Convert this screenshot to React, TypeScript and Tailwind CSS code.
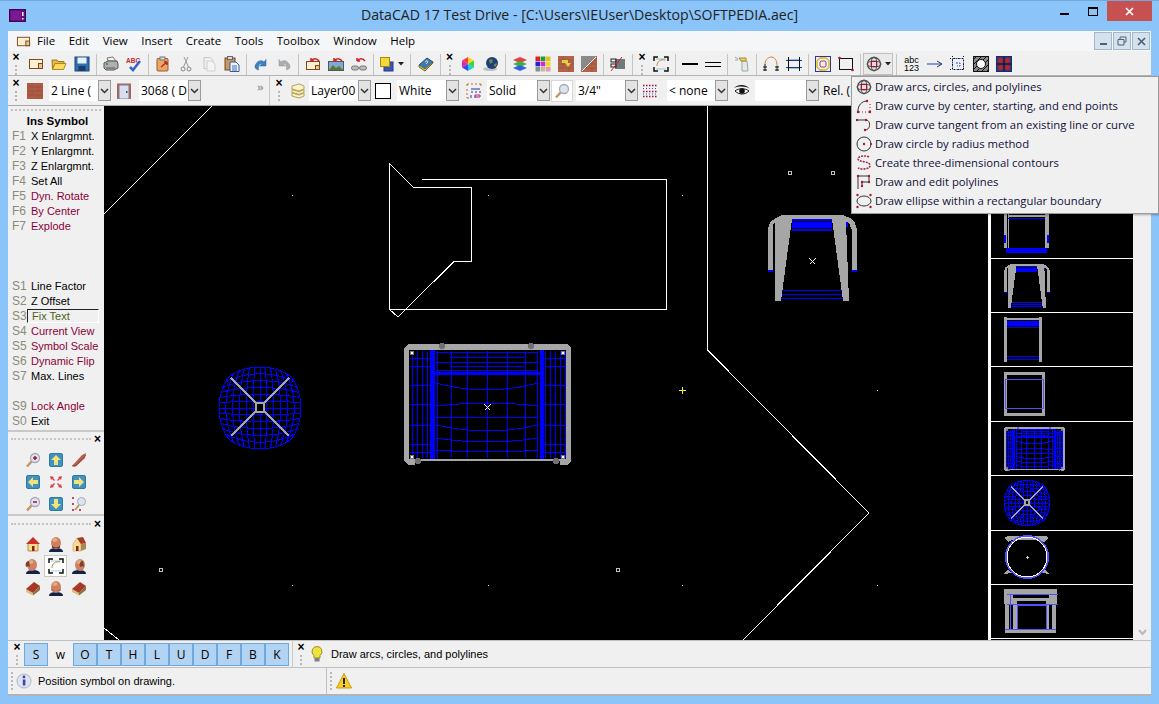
import React from "react";

const R = "#a5123a";
const G = "#a6a6a6";
const B = "#0000ff";
const LS = "font-['Liberation_Sans']";

type P = { children?: React.ReactNode; s?: number };
const I = ({ children, s = 16 }: P) => (
  <svg width={s} height={s} viewBox="0 0 16 16" className="block shrink-0" fill="none">{children}</svg>
);

const Doc = ({ s }: P) => <I s={s}><rect x="1.500" y="3.500" width="13" height="9" fill="#fdf0cf" stroke="#7b4a24" /><rect x="10.500" y="7.500" width="4" height="5" fill="#e8c48c" stroke="#7b4a24" /></I>;
const Folder = () => <I><path d="M1 4h5l1 1.500h6v2H4L1.500 13z" fill="#e6b93a" stroke="#9a7a20" /><path d="M4 7.500h11L12.500 13.500H1.500z" fill="#ffd95a" stroke="#a98a25" /></I>;
const Floppy = () => <I><rect x="1" y="1" width="14" height="14" fill="#2f6fb0" stroke="#1c4478" /><rect x="3.500" y="1.500" width="9" height="6" fill="#e8f1f8" /><rect x="4.500" y="10" width="7" height="5" fill="#1c3c68" /></I>;
const Printer = () => <I><path d="M4 2l6-1 3 4H5z" fill="#f4f4f4" stroke="#777" /><path d="M1 7l4-2h9l1 3v4l-4 2H3l-2-2z" fill="#b0b0b0" stroke="#555" /><rect x="3" y="7" width="2" height="2" fill="#2aa84a" /><path d="M3 12h9" stroke="#555" /></I>;
const Abc = () => <I><text x="0" y="6.500" fontSize="6.500" fontWeight="700" fill="#c02828" fontFamily="Liberation Sans">ABC</text><path d="M4 11l3 3 7-9" stroke="#3a62c8" strokeWidth="2.500" /></I>;
const Clip = () => <I><rect x="2" y="2.500" width="11" height="12.500" rx="1" fill="#e8a868" stroke="#9a5c28" /><rect x="5" y="1" width="5" height="3" fill="#d8d8d8" stroke="#777" /><path d="M6 11l6-5M12 6H9M12 6v3" stroke="#c02828" strokeWidth="1.500" /></I>;
const Sciss = () => <I><circle cx="5" cy="13" r="2" stroke="#8a8a8a" /><circle cx="11" cy="13" r="2" stroke="#8a8a8a" /><path d="M5.500 11L10 1M10.500 11L6 1" stroke="#9a9a9a" /></I>;
const Copy = () => <I><path d="M3 1.500h6l3 3v8H3z" fill="#efefef" stroke="#c8c8c8" /><path d="M6 5h5l3 3v7H6z" fill="#f4f4f4" stroke="#cfcfcf" /></I>;
const Paste = () => <I><rect x="1" y="2" width="10" height="12" fill="#c89a60" stroke="#6d4a24" /><rect x="3.500" y="0.500" width="5" height="3" fill="#ddd" stroke="#666" /><path d="M6 6h6l3 3v6.500H6z" fill="#eef4fb" stroke="#3a5a90" /><path d="M8 10h5M8 12h5M8 14h5" stroke="#3a70b8" /></I>;
const Undo = ({ grey }: { grey?: boolean }) => <I><path d={grey ? "M13 8C11 4 7 4 5 6L3 3.500V10h6.500L7.500 8C9 7 11 8 10.500 14C14 13 15 11 13 8z" : "M3 8C5 4 9 4 11 6L13 3.500V10H6.500L8.500 8C7 7 5 8 5.500 14C2 13 1 11 3 8z"} fill={grey ? "#a8adb2" : "#3f82c4"} stroke={grey ? "#92979c" : "#2a5f98"} strokeWidth="0.500" /></I>;
const RedArrow = () => <path d="M6 5C8 2 12 2 14 5M6 5V2M6 5h3" stroke="#d02020" strokeWidth="1.500" />;
const DocU = () => <I><rect x="1.500" y="5.500" width="13" height="8" fill="#fdf0cf" stroke="#7b4a24" /><rect x="10.500" y="9.500" width="4" height="4" fill="#e8c48c" stroke="#7b4a24" /><RedArrow /></I>;
const PicU = () => <I><rect x="0.500" y="5.500" width="15" height="9" fill="#7fa8d8" stroke="#555" /><path d="M1 14l4-5 3 3 3-2 4 4z" fill="#567a30" /><RedArrow /></I>;
const Chain = () => <I><rect x="0.500" y="10" width="7" height="4" rx="2" fill="#bbb" stroke="#777" /><rect x="8.500" y="10" width="7" height="4" rx="2" fill="#bbb" stroke="#777" /><RedArrow /></I>;
const Squares = () => <I><rect x="5" y="6" width="9" height="9" fill="#3a5ab0" stroke="#223a80" /><rect x="1.500" y="1.500" width="9" height="9" fill="#f4d83a" stroke="#a08a10" /></I>;
const Book = () => <I><path d="M1 9L9 2l6 4-8 8z" fill="#3a78c0" stroke="#1c4a88" /><path d="M1 9v2l6 4 8-8V6l-8 7z" fill="#e8c848" stroke="#7a6a20" /><path d="M7 6l2-1.500L10 6 8 8" stroke="#f4e080" /></I>;
const Cube = () => <I><path d="M8 1l6 3.500L8 8z" fill="#ffd020" /><path d="M14 4.500v7L8 8z" fill="#40d040" /><path d="M14 11.500L8 15V8z" fill="#20c8e0" /><path d="M8 15l-6-3.500L8 8z" fill="#3050e0" /><path d="M2 11.500v-7L8 8z" fill="#e020c0" /><path d="M2 4.500L8 1v7z" fill="#f04040" /></I>;
const Globe = () => <I><ellipse cx="7" cy="13" rx="7" ry="2" fill="#c0c0c0" /><circle cx="9" cy="7" r="6" fill="#1f3f78" /><path d="M6 4l3-1 1 3-3 2zM11 8l3-1-1 4-2-1z" fill="#6a8a50" /></I>;
const Layers = () => <I><path d="M1 4l7-3 7 3-7 3z" fill="#e04040" /><path d="M1 8l7-3 7 3-7 3z" fill="#40b040" /><path d="M1 12l7-3 7 3-7 3z" fill="#3060e0" /></I>;
const CGrid = () => { const c = ["#e02020", "#20a020", "#e0c020", "#2020e0", "#e020e0", "#e0e020", "#889088", "#c0b8a0", "#e0a0a0"]; return <I>{c.map((f, i) => <rect key={i} x={0.500 + (i % 3) * 5.200} y={0.500 + Math.floor(i / 3) * 5.200} width="4.600" height="4.600" fill={f} />)}</I>; };
const Brick = ({ v }: { v?: number }) => <I><rect width="16" height="16" fill={v === 1 ? "#ad5c44" : "#b3624a"} /><path d="M0 4h16M0 8h16M0 12h16M5 0v4M11 4v4M5 8v4M11 12v4" stroke="#8f4a38" strokeWidth="0.500" />{v === 2 && <path d="M4 4h6v3h3l-3 4-3-4H4z" fill="#e0d040" />}{v === 3 && <><path d="M0 0h16L0 16z" fill="#8a8a8a" /><path d="M1 15L15 1" stroke="#fff" /></>}</I>;
const Machine = () => <I><rect x="5" y="3" width="10" height="10" fill="#707880" /><rect x="1" y="3" width="5" height="3" fill="none" stroke="#222" /><rect x="1" y="8" width="5" height="3" fill="none" stroke="#222" /><path d="M1 15L12 1" stroke="#d02020" /></I>;
const Corners = ({ s }: P) => <I s={s}><path d="M1 5V1h4M11 1h4v4M15 11v4h-4M5 15H1v-4" stroke="#111" strokeWidth="1.500" /><path d="M4 10C4 5 8 3 12 4" stroke="#c08840" /><path d="M3 3l10 0M3 13h10" stroke="#40a0b0" strokeWidth="0.500" /></I>;
const HLine = () => <I><path d="M0 8h16" stroke="#000" strokeWidth="2" /></I>;
const DLine = () => <I><path d="M0 6.500h16M0 10.500h16" stroke="#000" /></I>;
const Spray = () => <I><path d="M8 5h5l1 10H8z" fill="#e8e8e8" stroke="#9aa" /><path d="M5 2h7v3H7z" fill="#f0d060" stroke="#a08a30" /><path d="M1 1l3 2M1 4h3" stroke="#8ab" /></I>;
const Curve = () => <I><path d="M2 15V8M0 11h4M0 14h4" stroke="#111" /><path d="M2 8C2 3 6 1 9 1c4 1 5 5 5 9" stroke="#d08030" /><path d="M14 15v-5M12 11h4M12 14h4" stroke="#111" /></I>;
const Dim = () => <I><rect x="2.500" y="4" width="11" height="8" fill="none" stroke="#4090a0" /><path d="M0 4.500h16M0 11.500h16" stroke="#203890" /><path d="M2.500 1v14M13.500 1v14" stroke="#111" /></I>;
const Octa = () => <I><rect x="0.500" y="0.500" width="15" height="15" stroke="#2a3a90" /><path d="M5 2h6l3 3v6l-3 3H5l-3-3V5z" stroke="#e0b020" strokeWidth="1.300" /><path d="M6 5h4l1 1v4l-1 1H6l-1-1V6z" stroke="#a04060" /></I>;
const RectDots = () => <I><rect x="1.500" y="2.500" width="13" height="11" stroke="#111" /><circle cx="1.500" cy="2" r="1.300" fill={R} /><circle cx="14.500" cy="14" r="1.300" fill={R} /></I>;
const Target = ({ s }: P) => <I s={s}><circle cx="8" cy="8" r="6.500" stroke="#444" strokeWidth="1.300" /><ellipse cx="8" cy="8" rx="3" ry="7" stroke="#555" /><ellipse cx="8" cy="8" rx="7" ry="3" stroke="#555" /><rect x="5.500" y="5.500" width="5" height="5" fill="#f0d8d0" stroke={R} /></I>;
const Arrow = () => <I><path d="M0 8h15M10 5l5 3-5 3" stroke="#2a3a90" /></I>;
const Dash = () => <I><rect x="2.500" y="2.500" width="11" height="11" stroke="#2a3a90" strokeDasharray="2 1" /><path d="M0 2.500h16M0 13.500h16M2.500 0v16M13.500 0v16" stroke="#111" strokeDasharray="1 3" /><path d="M6 7h4v3H7" stroke="#3050c0" strokeDasharray="2 1" /></I>;
const Hatch = () => <I><rect x="0.500" y="0.500" width="15" height="15" fill="#888" stroke="#111" /><path d="M0 4L4 0M0 9L9 0M0 14L14 0M3 16L16 3M8 16L16 8M13 16l3-3" stroke="#111" /><circle cx="8" cy="8" r="4.500" fill="#fff" stroke="#111" /></I>;
const FourD = () => <I><rect x="0.500" y="0.500" width="15" height="15" fill="#2a3a80" stroke="#1a2a70" /><path d="M8 1v14M1 8h14" stroke="#111" /><circle cx="4.500" cy="4.500" r="2.500" fill="#c02030" /><circle cx="11.500" cy="4.500" r="2.500" fill="#c02030" /><circle cx="4.500" cy="11.500" r="2.500" fill="#c02030" /><circle cx="11.500" cy="11.500" r="2.500" fill="#c02030" /></I>;
const Stack = () => <I><path d="M2 3l7-2 5 2v3L9 8 2 6z" fill="#fdf3c4" stroke="#b0a060" /><path d="M2 6.500L9 8.500l5-2v3L9 11.500 2 9.500z" fill="#f6e8a8" stroke="#b0a060" /><path d="M2 10l7 2 5-2v3l-5 2-7-2z" fill="#fdf3c4" stroke="#b0a060" /></I>;
const Door = () => <I><rect x="1" y="0.500" width="14" height="15.500" fill="#b5604a" /><rect x="3" y="2" width="10" height="14" fill="#d8e0f0" stroke="#7080a0" /><rect x="10" y="8" width="1.500" height="2" fill="#405080" /></I>;
const DotGrid = () => <I><path d="M1 2.500h14M1 8.500h14M1 13.500h14" stroke={R} strokeWidth="1.500" strokeDasharray="1.500 1.500" /><path d="M1 5.500h14" stroke="#3050c0" strokeWidth="1" strokeDasharray="1 2" /><path d="M1 11h14" stroke="#3050c0" strokeWidth="1" strokeDasharray="1 2" /></I>;
const LineStyle = () => <I><path d="M1 3V1h2M5 1h2M9 1h2M13 1h2v2M1 6v2M1 10v2M1 14v1h2" stroke="#c06820" /><path d="M5 6h9M5 9h2M9 9h2M13 9h2M5 12v3M9 12v3" stroke="#2030a0" /><path d="M9 12h5v2H9" stroke="#c02080" /></I>;
const Mag = ({ m }: { m?: string }) => <I><path d="M7 9L2 14.500" stroke="#c09860" strokeWidth="2.500" /><circle cx="10" cy="6" r="4.500" fill="#dce4f0" stroke="#a8a8b8" strokeWidth="1.300" />{m && <path d={m} stroke={R} strokeWidth="1.500" />}</I>;
const Eye = () => <I><path d="M0 5C4 1 12 1 16 6C12 3 5 3 0 5z" fill="#111" /><path d="M1 8C5 5 11 5 15 8C11 12 5 12 1 8z" fill="#fff" stroke="#111" /><circle cx="8" cy="8" r="2.800" fill="#111" /></I>;
const ArrowBtn = ({ d }: { d: string }) => <I><rect x="1.500" y="1.500" width="13" height="13" rx="1.500" fill="#3e93c0" stroke="#2f7aa4" /><path d={d} fill="#f2e27a" /></I>;
const Expand = () => <I><path d="M2 2l4 1-1 1 2 2-1 1-2-2-1 1zM14 2l-1 4-1-1-2 2-1-1 2-2-1-1zM14 14l-4-1 1-1-2-2 1-1 2 2 1-1zM2 14l1-4 1 1 2-2 1 1-2 2 1 1z" fill="#d8404a" /></I>;
const Pencil = () => <I><path d="M1 14L11 3l4-2-1 5-10 9z" fill="#b5604a" /><path d="M1 14l5-1 9-10" stroke="#7b3a28" strokeWidth="0.700" /></I>;
const DotMag = () => <I><path d="M8 9L4 14" stroke="#c09860" strokeWidth="2" /><circle cx="10.500" cy="5.500" r="4" fill="#dce4f0" stroke="#a8a8b8" /><circle cx="2" cy="2" r="1" fill={R} /><circle cx="2" cy="8" r="1" fill={R} /><circle cx="2" cy="14" r="1" fill={R} /><circle cx="9" cy="14" r="1" fill={R} /></I>;
const House = ({ side }: { side?: number }) => <I>
  {side === 1 && <><path d="M2 8L6 2l4 6v7H2z" fill="#f6dc90" stroke="#b09050" strokeWidth="0.500" /><path d="M10 8l5-1v6l-5 2z" fill="#a88a58" /><path d="M6 2l6-1 3 6-5 1z" fill="#a83828" /><rect x="5" y="10" width="2.500" height="5" fill="#8a2018" /></>}
  {side === 2 && <><path d="M1 9l7 4v2.500L1 12z" fill="#d8c080" /><path d="M8 13l7-7v4l-7 5.500z" fill="#8a7040" /><path d="M1 9l8-7 6 4-7 7z" fill="#a83828" /></>}
  {!side && <><path d="M3 7h10v8H3z" fill="#f6dc90" stroke="#b09050" /><path d="M8 1l7 7H1z" fill="#c83028" /><rect x="7" y="10" width="2.500" height="5" fill="#8a2018" /></>}
</I>;
const Head = ({ t = 0, back }: { t?: number; back?: boolean }) => <I><path d="M1 16c0-3 3-4 7-4s7 1 7 4z" fill="#14224a" /><ellipse cx={8 + t} cy="7" rx="5" ry="6" fill="#cc8260" /><ellipse cx={7 + t} cy="4" rx="2.500" ry="2" fill="#e4a888" />{!back && <path d={t ? `M${8 + t * 4} 3c-3 0-4 3-3 6 1-1 3-1 4 0z` : "M4 9c1 3 7 3 8 0v3H4z"} fill="#7a4030" />}{back && <path d="M3.500 8c2 4 7 4 9 0v3h-9z" fill="#a86048" />}</I>;
const Info = () => <I><circle cx="8" cy="8" r="7" fill="#e0e4f4" stroke="#b0b4c8" /><rect x="6.800" y="6.500" width="2.600" height="6" fill="#3a4aa0" /><circle cx="8" cy="4" r="1.400" fill="#3a4aa0" /></I>;
const Warn = () => <I><path d="M8 0.500L15.500 15H0.500z" fill="#f8cc20" stroke="#c89810" /><rect x="7" y="5" width="2" height="6" fill="#222" /><rect x="7" y="12" width="2" height="2" fill="#222" /></I>;
const Bulb = () => <I><path d="M8 0.500a5 5 0 0 1 3 9V12H5V9.500a5 5 0 0 1 3-9z" fill="#f0e040" stroke="#a09020" /><rect x="5.500" y="12" width="5" height="3.500" fill="#808080" /></I>;

const PArc = () => <I><path d="M2 13C2 7 6 3 11 3" stroke="#333" /><path d="M3 14h10M14 13V6" stroke={R} strokeDasharray="1 2" /><circle cx="2" cy="14" r="1.200" fill={R} /><circle cx="14" cy="14" r="1.200" fill={R} /><circle cx="11" cy="3" r="1.200" fill={R} /></I>;
const PTan = () => <I><path d="M1 3h9C15 3 15 13 9 13" stroke="#333" /><circle cx="1" cy="3" r="1.200" fill={R} /><circle cx="10" cy="3" r="1.200" fill={R} /><circle cx="9" cy="13" r="1.200" fill={R} /></I>;
const PCir = () => <I><circle cx="8" cy="8" r="7" stroke="#333" /><circle cx="8" cy="8" r="1.200" fill={R} /><circle cx="15" cy="8" r="1" fill={R} /></I>;
const PCon = () => <I><path d="M13 2C9 0 2 1 2 4s11 2 12 6-8 5-12 3" stroke="#9a2848" strokeWidth="1.500" strokeDasharray="2 1" /></I>;
const PPoly = () => <I><path d="M2 15V2h11v6H6v4" stroke="#333" /><circle cx="2" cy="2" r="1.200" fill={R} /><circle cx="13" cy="2" r="1.200" fill={R} /><circle cx="13" cy="8" r="1.200" fill={R} /><circle cx="6" cy="8" r="1.200" fill={R} /><circle cx="6" cy="12" r="1.200" fill={R} /></I>;
const PEll = () => <I><ellipse cx="8" cy="8" rx="7" ry="5" stroke="#333" /><circle cx="1.500" cy="2" r="1.200" fill={R} /><circle cx="14.500" cy="2" r="1.200" fill={R} /><circle cx="1.500" cy="14" r="1.200" fill={R} /><circle cx="14.500" cy="14" r="1.200" fill={R} /></I>;

const Slot = ({ children }: P) => <div className="w-[23px] h-[22px] flex items-center justify-center shrink-0">{children}</div>;
const Sep = ({ w = "w-[6px]" }: { w?: string }) => <div className={`${w} h-[21px] flex justify-center shrink-0`}><div className="w-px h-full bg-[#c4c4c4]" /></div>;
const Handle = ({ w }: { w: string }) => (
  <div className={`${w} flex flex-col items-center shrink-0 -mt-[2px]`}>
    <span className={`text-[12px] leading-[11px] font-bold text-black ${LS}`}>×</span>
    <span className="mt-[2px] h-[10px] border-l-2 border-dotted border-[#b8b8b8]" />
  </div>
);

const Combo = ({ t, ml, w = "w-[49px]" }: { t: string; ml: string; w?: string }) => (
  <div className={`${ml} flex h-[21px] shrink-0`}>
    <div className={`${w} bg-white pl-[2px] leading-[21px] text-[12px] text-black whitespace-nowrap overflow-hidden`}>{t}</div>
    <div className="w-[13px] bg-[#e3e3e3] border border-[#9a9a9a] flex items-center justify-center">
      <svg width="9" height="6" viewBox="0 0 9 6" fill="none"><path d="M1 1l3.500 3.500L8 1" stroke="#333" strokeWidth="1.500" /></svg>
    </div>
  </div>
);

const Row = ({ k, t, c = "text-black" }: { k?: string; t?: string; c?: string }) => (
  <div className={`h-[15px] flex leading-[15px] text-[11px] ${LS}`}>
    <span className="w-[23px] pl-[4px] text-[12px] text-[#8b8b78]">{k}</span>
    <span className={c}>{t}</span>
  </div>
);
const Grip = () => <div className="mx-[2px] h-0 border-t-2 border-dotted border-[#c4c4c4] flex-1" />;

const Mesh = () => {
  const cx = 260, cy = 408, r = 41, k = 0.42;
  const pt = (u: number, v: number) => `${(cx + u * r * Math.sqrt(1 - k * v * v)).toFixed(1)} ${(cy + v * r * Math.sqrt(1 - k * u * u)).toFixed(1)}`;
  const ts = Array.from({ length: 13 }, (_, i) => -1 + (i * 2) / 12);
  const vs = Array.from({ length: 21 }, (_, i) => -1 + i / 10);
  return (
    <g fill="none">
      {ts.map((t, i) => <path key={"a" + i} d={"M" + vs.map((v) => pt(t, v)).join("L")} stroke={B} vectorEffect="non-scaling-stroke" />)}
      {ts.map((t, i) => <path key={"b" + i} d={"M" + vs.map((v) => pt(v, t)).join("L")} stroke={B} vectorEffect="non-scaling-stroke" />)}
      <path d="M231 378L289 436M289 378L231 436" stroke={G} strokeWidth="1.500" vectorEffect="non-scaling-stroke" />
      <rect x="256" y="403" width="8" height="9" stroke={G} strokeWidth="2" fill="#000" vectorEffect="non-scaling-stroke" />
    </g>
  );
};

const Table = () => {
  const vx = [412, 417, 422, 427, 437, 451, 467, 487, 507, 525, 537, 545, 550, 555, 560, 565];
  const hy = [358, 366, 385, 404, 425, 444, 452];
  const curves: [number, number][] = [[383, 390], [406, 403], [425, 431], [438, 442], [450, 452]];
  const nss = { vectorEffect: "non-scaling-stroke" as const };
  return (
    <g fill="none">
      <path d="M408 344H567L571 348V461L567 465H560V461H415V465H408L404 461V348Z" fill={G} />
      <rect x="409" y="350" width="157" height="109" fill="#000" />
      {vx.map((x) => <path key={x} d={`M${x} 351V458`} stroke={B} {...nss} />)}
      {hy.map((y) => <path key={y} d={`M410 ${y}H430M545 ${y}H565`} stroke={B} {...nss} />)}
      <path d="M436 417H538" stroke={B} {...nss} />
      {[352, 357, 362, 366, 370].map((y, i) => <path key={y} d={`M${436 + (i % 2) * 14} ${y}H${538 - (i % 2) * 14}`} stroke={B} {...nss} />)}
      {curves.map(([e, m]) => <path key={e} d={`M436 ${e}Q487 ${2 * m - e} 538 ${e}`} stroke={B} {...nss} />)}
      <rect x="430" y="350" width="5" height="109" fill={B} />
      <rect x="540" y="350" width="4" height="109" fill={B} />
      <rect x="430" y="372" width="114" height="3" fill={B} />
      {[[442, 346], [531, 346], [418, 461], [556, 461]].map(([x, y]) => <circle key={x} cx={x} cy={y} r="3" fill="#707070" />)}
      {[[411, 352], [562, 352], [411, 456], [562, 456]].map(([x, y]) => <rect key={`${x}${y}`} x={x - 1} y={y - 1} width="3" height="3" fill="#fff" stroke="#777" {...nss} />)}
    </g>
  );
};

const Chair = () => (
  <g>
    <rect x="792" y="218" width="40" height="3" fill={B} />
    <rect x="792" y="222" width="40" height="6" fill={B} />
    <rect x="792" y="229" width="40" height="2" fill={B} />
    <path d="M776 218h6v9h-6zM842 218h6v9h-6z" fill={B} />
    <path d="M781 290H843M781 294H843M781 298H843" stroke={B} vectorEffect="non-scaling-stroke" />
    <path d="M768 270V228L771 221 778 217 782 215H843L850 218 855 223 857 230V270H852V230L849 223 846 222 849 301H843L832 219H792L781 301H775L775 222 773 225V270Z" fill={G} />
    <rect x="768" y="270" width="5" height="2" fill={B} />
    <rect x="852" y="270" width="5" height="2" fill={B} />
  </g>
);

const Cross = ({ x, y }: { x: number; y: number }) => <path d={`M${x - 3} ${y - 3}l6 6M${x + 3} ${y - 3}l-6 6`} stroke="#fff" />;

const cells = [
  { top: 204, h: 54 }, { top: 259, h: 53 }, { top: 313, h: 53 }, { top: 367, h: 54 },
  { top: 422, h: 53 }, { top: 476, h: 54 }, { top: 531, h: 53 }, { top: 585, h: 53 },
];
const thumbs: React.ReactNode[] = [
  <g key="0">
    <path d="M1004 214h3v34h-3zM1046 214h3v34h-3zM1008 214h1v34h-1zM1045 214h1v34h-1zM1008 215h37v2h-37z" fill={G} />
    <path d="M1004 235h2v8h-2zM1047 235h2v8h-2zM1006 248h41v5h-41zM1008 218h37v1h-37z" fill={B} />
  </g>,
  <g key="1" transform="translate(607 152.800) scale(0.517)"><Chair /></g>,
  <g key="2">
    <path d="M1007 321h32v5h-32zM1007 327h32v1h-32zM1007 356h32v1h-32zM1007 359h32v1h-32z" fill={B} />
    <path d="M1004 317h3v45h-3zM1039 317h3v45h-3zM1007 318h32v2h-32z" fill={G} />
  </g>,
  <g key="3"><rect x="1005.500" y="373.500" width="38" height="41" fill="none" stroke={G} strokeWidth="3" /><rect x="1005.500" y="379.500" width="38" height="29" fill="none" stroke="#5050ff" /></g>,
  <g key="4" transform="translate(856.500 301.500) scale(0.365)"><Table /></g>,
  <g key="5" transform="translate(884 278.600) scale(0.55)"><Mesh /></g>,
  <g key="6" fill="none">
    <path d="M1004 538q4-3 8-2h30q4-1 7 2l-5 4-4-2h-28l-4 2zM1004 574l4-5 3 4zM1049 574l-4-5-3 4z" fill={G} />
    <circle cx="1027" cy="557" r="21" stroke="#5050ff" strokeWidth="2" />
    <circle cx="1027" cy="557" r="20" stroke="#fff" />
    <path d="M1026 557h3M1027.500 556v3" stroke="#ccc" />
  </g>,
  <g key="7" fill="none">
    <rect x="1004" y="589" width="53" height="6" fill={G} />
    <rect x="1004" y="595" width="9" height="9" fill={G} />
    <rect x="1049" y="595" width="8" height="9" fill={G} />
    <rect x="1005" y="604" width="4" height="29" fill={G} />
    <rect x="1052" y="604" width="4" height="29" fill={G} />
    <rect x="1013" y="598" width="4" height="35" fill={G} />
    <rect x="1046" y="598" width="3" height="35" fill={G} />
    <rect x="1017" y="598" width="29" height="3" fill={G} />
    <rect x="1005" y="630" width="51" height="3" fill={G} />
    <path d="M1007 594.500H1058M1007 604.500H1058M1017.500 605.500H1046V629.500H1017.500ZM1005 629H1056M1010.500 595V629" stroke="#5050ff" />
  </g>,
];

const menuItems: [React.ReactNode, string][] = [
  [<Target />, "Draw arcs, circles, and polylines"],
  [<PArc />, "Draw curve by center, starting, and end points"],
  [<PTan />, "Draw curve tangent from an existing line or curve"],
  [<PCir />, "Draw circle by radius method"],
  [<PCon />, "Create three-dimensional contours"],
  [<PPoly />, "Draw and edit polylines"],
  [<PEll />, "Draw ellipse within a rectangular boundary"],
];

const Mdi = ({ children }: P) => <div className="w-[18px] h-[18px] mr-px bg-[#d4e2f0] border border-[#a6b8c8] flex items-center justify-center">{children}</div>;

export default function App() {
  return (
    <div className="relative w-[1159px] h-[704px] overflow-hidden bg-[#8bc4f9] border-t border-[#6fa9e0] flex flex-col font-['Open_Sans','Liberation_Sans',sans-serif] text-[12px] text-black">
      <div className="h-[30px] shrink-0 relative flex items-center pl-[9px]">
        <svg width="17" height="13" viewBox="0 0 17 13" className="mt-[-1px]"><rect x="0.500" y="0.500" width="16" height="12" fill="#6a0a78" stroke="#3a0a50" /><rect x="2" y="2" width="10" height="9" fill="#7a1a90" /><rect x="13" y="3" width="1.500" height="4" fill="#fff" /><rect x="13" y="9" width="1.500" height="1.500" fill="#fff" /></svg>
        <div className="flex-1 text-center text-[14.150px] text-[#222] leading-[30px] pr-[26px] -mt-[3px]">DataCAD 17 Test Drive - [C:\Users\IEUser\Desktop\SOFTPEDIA.aec]</div>
        <div className="absolute right-[7px] top-0 flex h-[20px]">
          <div className="w-[27px] flex items-center justify-center mr-[1px]"><div className="w-[9px] h-[2px] bg-black mt-[5px]" /></div>
          <div className="w-[27px] flex items-center justify-center"><div className="w-[10px] h-[9px] border border-black border-t-2" /></div>
          <div className="w-[45px] bg-[#c75050] flex items-center justify-center ml-[1px]">
            <svg width="9" height="9" viewBox="0 0 9 9"><path d="M1 1l7 7M8 1L1 8" stroke="#fff" strokeWidth="1.700" /></svg>
          </div>
        </div>
      </div>

      <div className="mx-[8px] flex-1 flex flex-col bg-[#f0f0f0] min-h-0">
        <div className="h-[20px] shrink-0 bg-[#f5f6f7] flex items-center text-[11.500px]">
          <div className="ml-[8px] mr-[6px]"><Doc s={15} /></div>
          <span>File</span>
          <span className="ml-[13.500px]">Edit</span>
          <span className="ml-[13.500px]">View</span>
          <span className="ml-[13.500px]">Insert</span>
          <span className="ml-[13.500px]">Create</span>
          <span className="ml-[13.500px]">Tools</span>
          <span className="ml-[13.500px]">Toolbox</span>
          <span className="ml-[13.500px]">Window</span>
          <span className="ml-[13.500px]">Help</span>
          <div className="ml-auto flex">
            <Mdi><div className="w-[7px] h-[2px] bg-[#50606e] mt-[6px]" /></Mdi>
            <Mdi><svg width="10" height="10" viewBox="0 0 10 10" fill="none"><path d="M3 3V1h6v5H7M1 3.500h6v5.500H1z" stroke="#50606e" /></svg></Mdi>
            <Mdi><svg width="9" height="9" viewBox="0 0 9 9"><path d="M1 1l7 7M8 1L1 8" stroke="#50606e" strokeWidth="1.700" /></svg></Mdi>
          </div>
        </div>

        <div className="h-[25px] shrink-0 flex items-center border-b border-[#b4b4b4] pt-[2px]">
          <Handle w="w-[16px]" />
          <Slot><Doc /></Slot><Slot><Folder /></Slot><Slot><Floppy /></Slot><Sep />
          <Slot><Printer /></Slot><Slot><Abc /></Slot><Sep />
          <Slot><Clip /></Slot><Slot><Sciss /></Slot><Slot><Copy /></Slot><Slot><Paste /></Slot><Sep />
          <Slot><Undo /></Slot><Slot><Undo grey /></Slot><Sep />
          <Slot><DocU /></Slot><Slot><PicU /></Slot><Slot><Chain /></Slot><Sep />
          <div className="w-[30px] h-[22px] flex items-center justify-center gap-[3px] shrink-0"><Squares /><svg width="6" height="4" viewBox="0 0 6 4"><path d="M0 0h6L3 3.500z" fill="#222" /></svg></div>
          <Sep w="w-[8px]" />
          <Slot><Book /></Slot><Sep /><Handle w="w-[13px]" />
          <Slot><Cube /></Slot><Slot><Globe /></Slot><Sep />
          <Slot><Layers /></Slot><Slot><CGrid /></Slot><Slot><Brick v={2} /></Slot><Slot><Brick v={3} /></Slot><Sep />
          <Slot><Machine /></Slot><Sep /><Handle w="w-[14px]" />
          <Slot><Corners /></Slot><Sep />
          <Slot><HLine /></Slot><Slot><DLine /></Slot><Sep />
          <Slot><Spray /></Slot><Sep />
          <Slot><Curve /></Slot><Slot><Dim /></Slot><Sep />
          <Slot><Octa /></Slot><Slot><RectDots /></Slot><Sep />
          <div className="w-[30px] h-[22px] bg-[#eaeaea] border border-[#c0c0c0] flex items-center justify-center gap-[3px] shrink-0"><Target /><svg width="6" height="4" viewBox="0 0 6 4"><path d="M0 0h6L3 3.500z" fill="#222" /></svg></div>
          <Sep w="w-[7px]" />
          <Slot><div className={`text-[9px] leading-[8px] text-center ${LS}`}>abc<br />123</div></Slot>
          <Slot><Arrow /></Slot><Slot><Dash /></Slot><Slot><Hatch /></Slot><Slot><FourD /></Slot>
        </div>

        <div className="h-[30px] shrink-0 flex items-center border-b border-[#a8a8a8]">
          <Handle w="w-[16px]" />
          <div className="ml-[3px]"><Brick v={1} /></div>
          <Combo t="2 Line (" ml="ml-[6px]" />
          <div className="ml-[5px]"><Door /></div>
          <Combo t="3068 ( D" ml="ml-[7px]" />
          <span className="ml-[56px] w-[12px] text-[11px] text-[#a0a0a0] font-bold -mt-[6px]">»</span>
          <div className="w-px h-full bg-[#c8c8c8]" />
          <div className="ml-[2px]"><Handle w="w-[14px]" /></div>
          <div className="ml-[4px]"><Stack /></div>
          <Combo t="Layer00" ml="ml-[3px]" />
          <div className="ml-[4px] w-[16px] h-[16px] bg-white border border-black" />
          <Combo t="  White" ml="ml-[6px]" />
          <div className="ml-[7px]"><LineStyle /></div>
          <Combo t="Solid" ml="ml-[5px]" w="w-[50px]" />
          <div className="ml-[1px] w-[22px] h-[22px] bg-white border border-[#d8d8d8] flex items-center justify-center"><Mag /></div>
          <Combo t={'3/4"'} ml="ml-[3px]" />
          <div className="ml-[4px]"><DotGrid /></div>
          <Combo t="< none" ml="ml-[9px]" w="w-[48px]" />
          <div className="ml-[6px]"><Eye /></div>
          <Combo t="" ml="ml-[5px]" w="w-[51px]" />
          <span className="ml-[4px] whitespace-nowrap">Rel. (</span>
        </div>

        <div className="flex-1 flex min-h-0">
          <div className="w-[96px] shrink-0 flex flex-col">
            <div className="h-[326px] pt-[3px] border-b-2 border-[#c8c8c8] relative">
              <div className="flex px-[1px]"><Grip /></div>
              <div className="mt-[3px]">
                <div className={`h-[15px] leading-[15px] text-[11.500px] font-bold text-center pl-[3px] ${LS}`}>Ins Symbol</div>
                <Row k="F1" t="X Enlargmnt." /><Row k="F2" t="Y Enlargmnt." /><Row k="F3" t="Z Enlargmnt." /><Row k="F4" t="Set All" />
                <Row k="F5" t="Dyn. Rotate" c="text-[#8b0038]" /><Row k="F6" t="By Center" c="text-[#8b0038]" /><Row k="F7" t="Explode" c="text-[#8b0038]" />
                <div className="h-[45px]" />
                <Row k="S1" t="Line Factor" /><Row k="S2" t="Z Offset" />
                <div className={`h-[15px] flex leading-[15px] text-[11px] ${LS}`}>
                  <span className="w-[19px] pl-[4px] text-[12px] text-[#8b8b78]">S3</span>
                  <span className="w-[72px] h-[14px] pl-[4px] border-t border-l border-[#222] border-r border-b border-r-white border-b-white text-[#4c6020] leading-[13px]">Fix Text</span>
                </div>
                <Row k="S4" t="Current View" c="text-[#8b0038]" /><Row k="S5" t="Symbol Scale" c="text-[#8b0038]" /><Row k="S6" t="Dynamic Flip" c="text-[#8b0038]" /><Row k="S7" t="Max. Lines" />
                <Row />
                <Row k="S9" t="Lock Angle" c="text-[#8b0038]" /><Row k="S0" t="Exit" />
              </div>
            </div>

            <div className="h-[84px] border-b-2 border-[#c8c8c8] relative">
              <div className="flex items-center h-[14px] pl-[1px] pr-[3px]"><Grip /><span className={`text-[12px] font-bold leading-[12px] ml-[1px] ${LS}`}>×</span></div>
              <div className="grid grid-cols-[repeat(3,23px)] auto-rows-[22px] ml-[13px] mt-[3px] place-items-center">
                <Mag m="M8 6h4M10 4v4" /><ArrowBtn d="M8 3l5 5h-3v5H6V8H3z" /><Pencil />
                <ArrowBtn d="M3 8l5-5v3h5v4H8v3z" /><Expand /><ArrowBtn d="M13 8l-5-5v3H3v4h5v3z" />
                <Mag m="M8 6h4" /><ArrowBtn d="M8 13l5-5h-3V3H6v5H3z" /><DotMag />
              </div>
            </div>

            <div className="flex-1 relative">
              <div className="flex items-center h-[15px] pl-[1px] pr-[3px]"><Grip /><span className={`text-[12px] font-bold leading-[12px] ml-[1px] ${LS}`}>×</span></div>
              <div className="grid grid-cols-[repeat(3,23px)] auto-rows-[22px] ml-[13px] mt-[2px] place-items-center">
                <House /><Head /><House side={1} />
                <Head t={-1} /><div className="w-[23px] h-[22px] bg-white border border-[#c8c8c8] flex items-center justify-center"><Corners /></div><Head t={1} />
                <House side={2} /><Head back /><House side={2} />
              </div>
            </div>
          </div>

          <div className="flex-1 bg-black min-w-0">
            <svg viewBox="104 106 884 534" className="block w-full h-full" shapeRendering="crispEdges" fill="none">
              <g stroke="#fff">
                <path d="M212 106L104 214M104 628L119 640" />
                <path d="M389.500 163.500L413.500 187.500H471.500V261.500H454L398 317L389.500 309.500Z" />
                <path d="M389.500 309.500H666.500V179.500H422" />
                <path d="M707.500 106V350L869 513L743 640" />
              </g>
              {[[790, 173], [833, 173], [161, 570], [618, 570]].map(([x, y]) => <rect key={`${x}${y}`} x={x - 1.500} y={y - 1.500} width="3" height="3" stroke="#c0c0c0" />)}
              {[[292, 195], [488, 195], [682, 195], [292, 585], [488, 585], [682, 585], [877, 585], [877, 390], [292, 390]].map(([x, y]) => <rect key={`${x}${y}`} x={x} y={y} width="1" height="1" fill="#ddd" />)}
              <path d="M679 390.500h7M682.500 387v7" stroke="#f0f020" />
              <Mesh />
              <Table />
              <Cross x={487.500} y={407.500} />
              <Chair />
              <Cross x={812.500} y={261.500} />
            </svg>
          </div>

          <div className="w-[3px] shrink-0 bg-white" />
          <div className="w-[142px] shrink-0 bg-black flex flex-col justify-end overflow-hidden pb-[1px]">
            {cells.map((c, i) => (
              <div key={i} className="shrink-0 border-b border-white">
                <svg viewBox={`991 ${c.top} 142 ${c.h}`} width="142" height={c.h} className="block" shapeRendering="crispEdges">{thumbs[i]}</svg>
              </div>
            ))}
          </div>
          <div className="w-[18px] shrink-0 bg-[#f0f0f0] flex flex-col justify-end items-center pb-[4px]">
            <svg width="9" height="7" viewBox="0 0 9 7" fill="none"><path d="M1 1l3.500 4L8 1" stroke="#b8b8b8" strokeWidth="2" /></svg>
          </div>
        </div>

        <div className="h-[28px] shrink-0 flex items-center border-y border-[#c0c0c0]">
          <div className="w-[16px] pl-[1px]"><Handle w="w-[16px]" /></div>
          <div className="flex h-[23px]">
            {["S", "w", "O", "T", "H", "L", "U", "D", "F", "B", "K"].map((l) =>
              l === "w"
                ? <div key={l} className="w-[25px] text-center leading-[23px] text-[12px]">{l}</div>
                : <div key={l} className="w-[24px] bg-[#b3d3f2] border border-[#6ea8e0] text-center leading-[21px] text-[12px]">{l}</div>
            )}
          </div>
          <div className="ml-[3px] w-px h-full bg-[#c8c8c8]" />
          <div className="ml-[1px]"><Handle w="w-[14px]" /></div>
          <div className="ml-[1px]"><Bulb /></div>
          <span className={`ml-[6px] text-[11px] ${LS}`}>Draw arcs, circles, and polylines</span>
        </div>

        <div className="h-[28px] shrink-0 flex items-center border-b-2 border-[#b4b4b4]">
          <div className="w-[319px] flex items-center h-full border-r border-[#c0c0c0]">
            <div className="ml-[3px] mr-[3px] h-[18px] border-l-2 border-dotted border-[#b8b8b8]" />
            <Info />
            <span className={`ml-[6px] text-[11px] ${LS}`}>Position symbol on drawing.</span>
          </div>
          <div className="ml-[3px] mr-[4px] h-[18px] border-l-2 border-dotted border-[#b8b8b8]" />
          <Warn />
        </div>
      </div>
      <div className="h-[8px] shrink-0" />

      <div className="absolute left-[851px] top-[75px] w-[308px] h-[138px] bg-[#f0f0f0] border border-[#9c9c9c] shadow-[1px_1px_2px_rgba(0,0,0,0.3)] pt-[0.500px] pl-[2px] z-10">
        {menuItems.map(([ic, t]) => (
          <div key={t} className="h-[19px] flex items-center">
            <div className="w-[21px] flex justify-center pr-[2px]">{ic}</div>
            <span className="text-[11.300px] text-[#10103a] whitespace-nowrap">{t}</span>
          </div>
        ))}
      </div>
    </div>
  );
}
